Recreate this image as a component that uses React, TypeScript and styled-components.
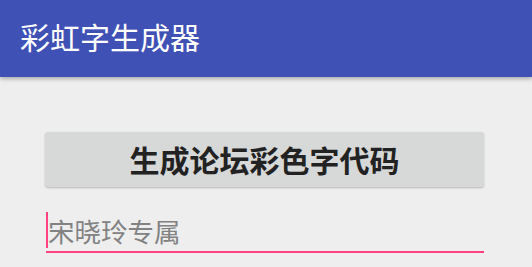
import React from "react";
import styled, { createGlobalStyle } from "styled-components";

const Global = createGlobalStyle`
  html, body {
    margin: 0;
    padding: 0;
    background: #eeeeee;
    font-family: "Noto Sans CJK SC", "Noto Sans", sans-serif;
  }
`;

const Page = styled.div`
  width: 532px;
  height: 267px;
  overflow: hidden;
  background: #eeeeee;
`;

const AppBar = styled.header`
  height: 77px;
  background: #3f51b5;
  box-shadow: 0 2px 4px rgba(0, 0, 0, 0.28);
  display: flex;
  align-items: center;
  padding: 0 0 6px 20px;
  box-sizing: border-box;
  position: relative;
  z-index: 1;
`;

const Title = styled.h1`
  margin: 0;
  font-size: 30px;
  font-weight: 400;
  color: #ffffff;
  line-height: 1;
`;

const Content = styled.main`
  display: flex;
  flex-direction: column;
  padding: 55px 48px 0 45px;
`;

const Button = styled.button`
  height: 55px;
  border: none;
  border-radius: 3px;
  background: #d7d8d8;
  box-shadow: 0 1px 2px rgba(0, 0, 0, 0.22);
  font-family: "Noto Sans CJK SC", "Noto Sans", sans-serif;
  font-size: 30px;
  font-weight: 700;
  color: #222222;
  padding: 0 0 2px;
  display: flex;
  align-items: center;
  justify-content: center;
`;

const Field = styled.div`
  margin: 25px 0 0 1px;
  display: flex;
  flex-direction: column;
`;

const Row = styled.div`
  display: flex;
  align-items: center;
  height: 36px;
`;

const Caret = styled.span`
  width: 2px;
  height: 36px;
  background: #ff4081;
  flex: none;
`;

const Text = styled.span`
  font-size: 26.5px;
  line-height: 36px;
  color: #828282;
  margin-top: 1px;
`;

const Underline = styled.div`
  margin-top: 3px;
  height: 2px;
  background: #ff4081;
`;

export default function App() {
  return (
    <Page>
      <Global />
      <AppBar>
        <Title>彩虹字生成器</Title>
      </AppBar>
      <Content>
        <Button>生成论坛彩色字代码</Button>
        <Field>
          <Row>
            <Caret />
            <Text>宋晓玲专属</Text>
          </Row>
          <Underline />
        </Field>
      </Content>
    </Page>
  );
}
